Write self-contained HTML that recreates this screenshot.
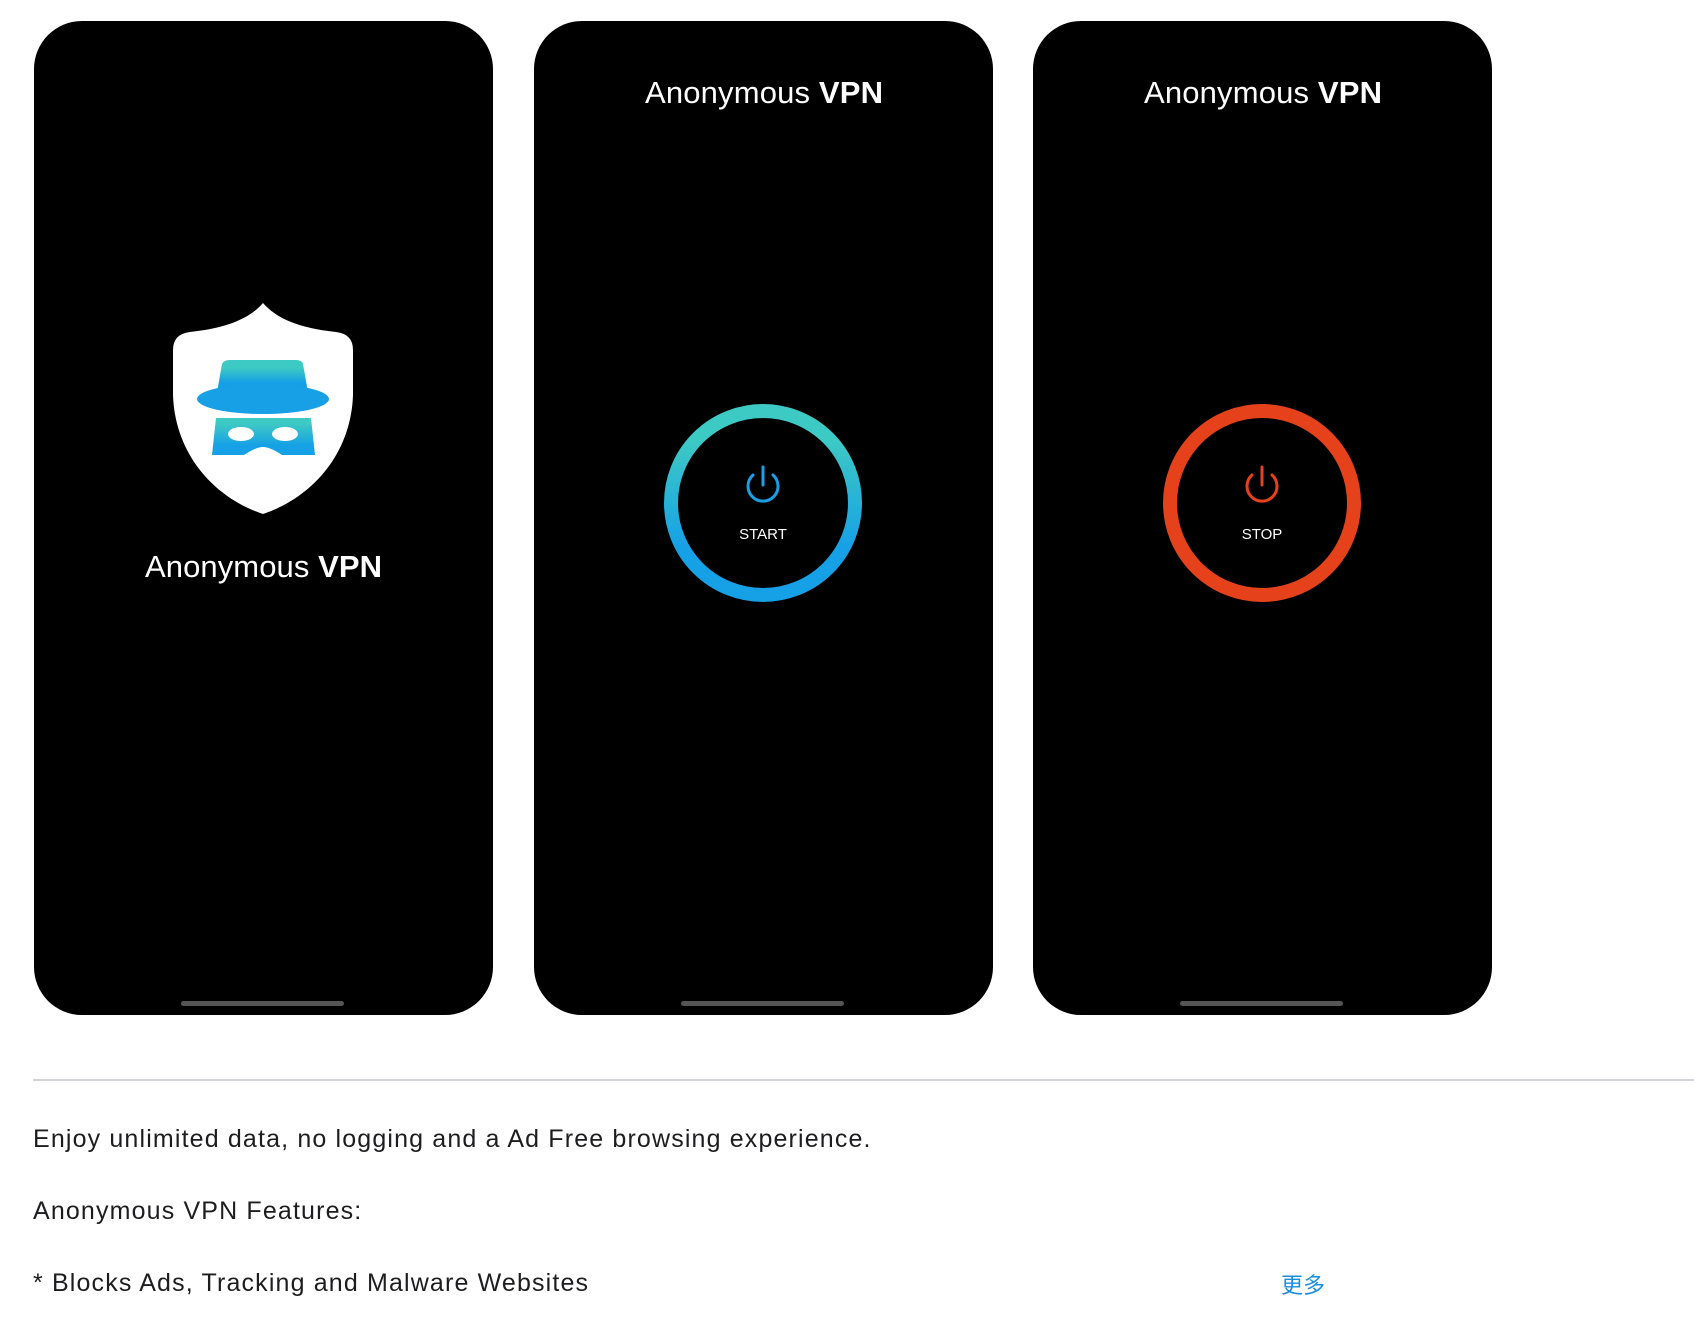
<!DOCTYPE html>
<html><head><meta charset="utf-8"><style>
body{margin:0;background:#fff;width:1694px;height:1322px;overflow:hidden;font-family:"Liberation Sans","Noto Sans CJK SC",sans-serif}
svg{position:absolute;left:0;top:0}
.t{position:absolute;left:33px;font-size:25px;letter-spacing:1.15px;color:#1d1d1f;white-space:nowrap}
</style></head><body>
<svg width="1694" height="1322" viewBox="0 0 1694 1322">
<defs>
<linearGradient id="g1" x1="0" y1="0" x2="0" y2="1"><stop offset="0.15" stop-color="#3ecac4"/><stop offset="0.75" stop-color="#16a0e6"/></linearGradient>
<linearGradient id="g2" x1="0" y1="0" x2="0" y2="1"><stop offset="0.2" stop-color="#3ecac4"/><stop offset="0.6" stop-color="#159fe6"/><stop offset="1" stop-color="#1aa0e6"/></linearGradient>
</defs>
<rect x="34" y="21" width="459" height="994" rx="48" fill="#000"/>
<rect x="534" y="21" width="459" height="994" rx="48" fill="#000"/>
<rect x="1033" y="21" width="459" height="994" rx="48" fill="#000"/>
<g fill="#555"><rect x="181" y="1001" width="163" height="5" rx="2.5"/><rect x="681" y="1001" width="163" height="5" rx="2.5"/><rect x="1180" y="1001" width="163" height="5" rx="2.5"/></g>
<path d="M263 303 C250 318 228 328 190 332 Q173 334 173 350 L173 395 C175 455 215 498 263 514 C311 498 351 455 353 395 L353 350 Q353 334 336 332 C298 328 276 318 263 303 Z" fill="#fff"/>
<path d="M222 364 Q224 360 230 360 L296 360 Q302 360 303 364 L309 398 L216 398 Z" fill="url(#g2)"/>
<ellipse cx="263" cy="399" rx="66" ry="15" fill="#18a0e6"/>
<path d="M216 418 L311 418 L315 455 L282 455 Q270 447 263 447 Q256 447 244 455 L212 455 Z" fill="url(#g1)"/>
<ellipse cx="241" cy="434" rx="13" ry="7" fill="#fff"/><ellipse cx="285" cy="434" rx="13" ry="7" fill="#fff"/>
<text x="145" y="577" fill="#fff" font-size="31" textLength="237" font-family="Liberation Sans">Anonymous <tspan font-weight="bold">VPN</tspan></text>
<text x="645" y="103" fill="#fff" font-size="31" textLength="238" font-family="Liberation Sans">Anonymous <tspan font-weight="bold">VPN</tspan></text>
<text x="1144" y="103" fill="#fff" font-size="31" textLength="238" font-family="Liberation Sans">Anonymous <tspan font-weight="bold">VPN</tspan></text>
<circle cx="763" cy="503" r="92" fill="none" stroke="url(#g1)" stroke-width="14"/>
<path d="M753 475 A15 15 0 1 0 773 475" fill="none" stroke="#18a0e6" stroke-width="3" stroke-linecap="round"/>
<line x1="763" y1="467" x2="763" y2="485" stroke="#18a0e6" stroke-width="3" stroke-linecap="round"/>
<text x="763" y="539" fill="#fff" font-size="15" text-anchor="middle" font-family="Liberation Sans">START</text>
<circle cx="1262" cy="503" r="92" fill="none" stroke="#e5421c" stroke-width="14"/>
<path d="M1252 475 A15 15 0 1 0 1272 475" fill="none" stroke="#e5421c" stroke-width="3" stroke-linecap="round"/>
<line x1="1262" y1="467" x2="1262" y2="485" stroke="#e5421c" stroke-width="3" stroke-linecap="round"/>
<text x="1262" y="539" fill="#fff" font-size="15" text-anchor="middle" font-family="Liberation Sans">STOP</text>
<rect x="33" y="1079" width="1661" height="2" fill="#d2d2d7"/>
</svg>
<div class="t" style="top:1125px">Enjoy unlimited data, no logging and a Ad Free browsing experience.</div>
<div class="t" style="top:1197px">Anonymous VPN Features:</div>
<div class="t" style="top:1269px">* Blocks Ads, Tracking and Malware Websites</div>
<div class="t" style="top:1268px;left:1281px;color:#1a8fe0;font-size:22px;letter-spacing:0">更多</div>
</body></html>
